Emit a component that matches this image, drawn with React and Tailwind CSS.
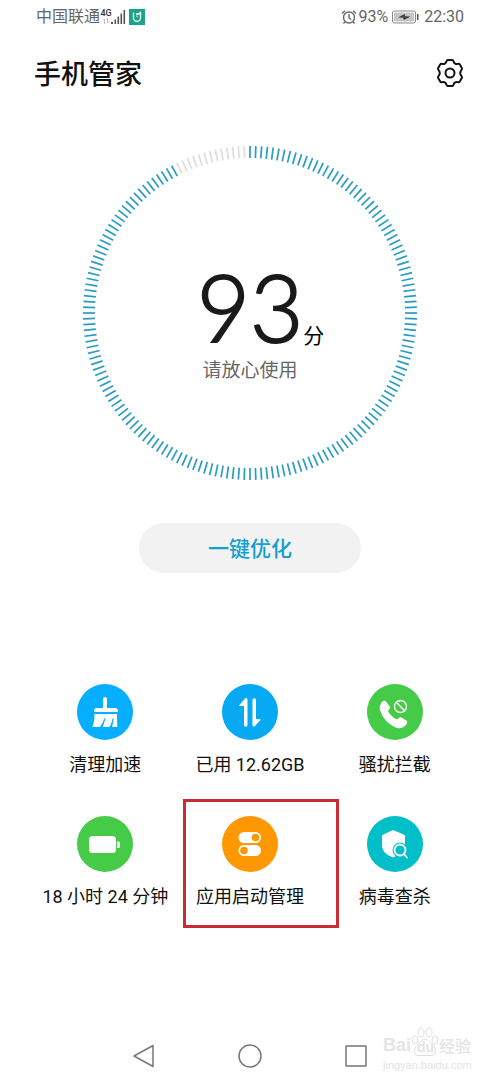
const TICK_COUNT = 180;
const SCORE = 93;

const StatusBar = () => (
  <div className="flex h-[34px] items-center justify-between pr-9 pl-9 text-base text-[#666]">
    <div className="flex items-center">
      <span>中国联通</span>
      <div className="ml-px flex h-4 w-2.5 flex-col items-center">
        <span className="text-[9px] leading-2 font-medium text-[#333]">4G</span>
        <svg viewBox="0 0 8 6" className="mt-px h-1.5 w-2" stroke="#bbb" strokeWidth="1" fill="none">
          <path d="M2.500 6V1L1 2.500M5.500 0v5L7 3.500" />
        </svg>
      </div>
      <svg viewBox="0 0 16 16" className="h-4 w-4" fill="#555">
        <path d="M0 13h2v2H0zM3.500 10.500h1.600V15H3.500zM6.500 7.500h1.600V15H6.500zM9.500 4.500h1.600V15H9.500zM12.500 1h1.600v14h-1.600z" />
      </svg>
      <svg viewBox="0 0 16 16" className="ml-0.5 h-4 w-4">
        <rect width="16" height="16" fill="#18a589" />
        <path d="M4.500 3.500v5.300a3.500 3.500 0 0 0 7 0V3.500L9.700 5H7" fill="none" stroke="#fff" strokeWidth="1.300" />
        <path d="M8 6.500v1.500" fill="none" stroke="#fff" strokeWidth="1" />
      </svg>
    </div>
    <div className="flex items-center">
      <svg viewBox="0 0 16 16" className="h-4 w-4" fill="none" stroke="#666" strokeWidth="1.400">
        <circle cx="8" cy="8.500" r="5.500" />
        <path d="M8 5v4l2.200 1.500M1 4.500 4 1.800M15 4.500l-3-2.700M3.800 13l-1.300 1.500M12.200 13l1.300 1.500" />
      </svg>
      <span className="ml-px">93%</span>
      <svg viewBox="0 0 28 14" className="mr-1 ml-1 h-3.5 w-7">
        <rect x="0.5" y="1" width="23" height="12" rx="2" fill="#fff" stroke="#888" />
        <rect x="2" y="2.500" width="20" height="9" rx="1" fill="#c6c6c6" />
        <path d="M6 7.500 12.500 4l1 2.200L18.500 6.500 12 10l-1-2.200z" fill="#444" />
        <path d="M25 4h1.500v6H25z" fill="#555" />
      </svg>
      <span>22:30</span>
    </div>
  </div>
);

const Header = () => (
  <header className="flex h-[78px] items-center justify-between pr-9 pl-[34px]">
    <h1 className="pt-1 text-[27px] font-medium text-[#111]">手机管家</h1>
    <button type="button" aria-label="设置">
      <svg viewBox="0 0 28 30" className="h-[30px] w-7" fill="none" stroke="#111" strokeWidth="2" strokeLinejoin="round">
        <path d="M12 2h4c.8 0 1.300.4 1.500 1.200.5 2.300 2.300 3.300 4.500 2.700.8-.2 1.400 0 1.800.7l2 3.400c.4.700.3 1.300-.3 1.900-1.700 1.600-1.700 4.600 0 6.200.6.600.7 1.200.3 1.900l-2 3.400c-.4.700-1 .9-1.800.7-2.200-.6-4 .4-4.500 2.700-.2.800-.7 1.200-1.500 1.200h-4c-.8 0-1.300-.4-1.500-1.200-.5-2.300-2.300-3.300-4.500-2.700-.8.200-1.400 0-1.800-.7l-2-3.400c-.4-.7-.3-1.300.3-1.900 1.700-1.600 1.700-4.600 0-6.200-.6-.6-.7-1.200-.3-1.900l2-3.400c.4-.7 1-.9 1.800-.7 2.200.6 4-.4 4.500-2.700C10.700 2.400 11.200 2 12 2z" />
        <circle cx="14" cy="15" r="4.500" />
      </svg>
    </button>
  </header>
);

const ScoreRing = () => {
  const filled = Math.round((TICK_COUNT * SCORE) / 100);
  return (
    <section className="relative mx-auto mt-[31px] h-[340px] w-[340px]">
      <svg viewBox="-170 -170 340 340" className="h-full w-full" strokeWidth="1.700">
        {Array.from({ length: TICK_COUNT }, (_, i) => (
          <line
            key={i}
            y1="-167"
            y2="-155"
            stroke={i < filled ? '#2a9cbf' : '#dedede'}
            transform={`rotate(${i * 2})`}
          />
        ))}
      </svg>
      <div className="absolute inset-0 flex flex-col items-center pt-[129px]">
        <div className="relative font-[Lato] text-[92px] leading-[70px] font-light text-[#1a1a1a]">
          <span className="[-webkit-text-stroke:2px_#1a1a1a]">{SCORE}</span>
          <span className="absolute -bottom-0.5 left-full font-['Noto_Sans_CJK_SC'] text-[21px] leading-5 font-normal text-black">分</span>
        </div>
        <p className="mt-[17px] text-[19px] leading-6 text-[#666]">请放心使用</p>
      </div>
    </section>
  );
};

const BroomIcon = () => (
  <svg viewBox="0 0 56 56" fill="#fff">
    <path d="M26 15a2 2 0 0 1 4 0v9h8a3 3 0 0 1 3 3v1H17v-1a3 3 0 0 1 3-3h6z" />
    <path d="M17.500 30H40c0 4.500.3 9 .3 13H34.500l1.200-6.500L32.500 43h-7.300l2-6.500L23 43h-7.500c1.500-4 2-8.500 2-13z" />
    <path d="M27.800 34.500 25 43.500M36 34.500l-1.500 9" fill="none" stroke="#06aeff" strokeWidth="1.200" />
  </svg>
);

const TrafficIcon = () => (
  <svg viewBox="0 0 56 56" fill="#fff">
    <path d="M17 21.500 23 14.500c.8-1 2.500-.5 2.500 1V41a1.700 1.700 0 0 1-3.500 0V22h-4.500z" />
    <path d="M39 35.500 33 42c-.8 1-2.500.5-2.500-1V16a1.700 1.700 0 0 1 3.500 0v19z" />
  </svg>
);

const PhoneBlockIcon = () => (
  <svg viewBox="0 0 56 56">
    <path d="M14 19.500c1.500-2.500 3.500-3.500 5-2l3.500 4.500c1 1.500.5 2.500-.5 3.500s-1 1.500-.5 2.500c2 3 4.500 5.500 7.500 7 1 .5 1.500.5 2.300-.4 1-1.300 2-1.600 3.500-.8l4.500 2.700c1.700 1 1 3-.5 4.500-2.500 2.800-5.800 4-10 2.500C20.500 40 15 33 13 26c-.7-2.500 0-4.500 1-6.500z" fill="#fff" />
    <g fill="none" stroke="#fff" strokeWidth="1.400">
      <circle cx="33.500" cy="22.500" r="6" />
      <path d="m29.300 18.300 8.400 8.400" />
    </g>
  </svg>
);

const BatteryIcon = () => (
  <svg viewBox="0 0 56 56" fill="#fff">
    <rect x="12" y="20" width="27" height="17" rx="3.500" />
    <path d="M40 25.500h1.500A1.500 1.500 0 0 1 43 27v3.500a1.500 1.500 0 0 1-1.500 1.500H40z" />
  </svg>
);

const TogglesIcon = () => (
  <svg viewBox="0 0 56 56">
    <rect x="16.500" y="16" width="22.500" height="11" rx="5.500" fill="#fff" />
    <rect x="16.500" y="29" width="22.500" height="11" rx="5.500" fill="#fff" />
    <circle cx="33.500" cy="21.500" r="3.800" fill="#ff9800" />
    <circle cx="22" cy="34.500" r="3.800" fill="#ff9800" />
  </svg>
);

const ShieldScanIcon = () => (
  <svg viewBox="0 0 56 56">
    <path d="m26 14 10.500 4.500c1 .4 1.500 1 1.500 2V29c0 6-5 9.500-12 12.500C19 38.500 15 35 15 29v-8.500c0-1 .5-1.600 1.500-2z" fill="#fff" />
    <circle cx="33" cy="34" r="7.500" fill="#00bfc9" />
    <g fill="none" stroke="#fff" strokeWidth="1.800" strokeLinecap="round">
      <circle cx="33" cy="34" r="5.500" />
      <path d="m37 38 3 3.500" />
    </g>
  </svg>
);

const tools = [
  { label: '清理加速', color: 'bg-[#06aeff]', Icon: BroomIcon },
  { label: '已用 12.62GB', color: 'bg-[#06a9f2]', Icon: TrafficIcon },
  { label: '骚扰拦截', color: 'bg-[#46cb48]', Icon: PhoneBlockIcon },
  { label: '18 小时 24 分钟', color: 'bg-[#46cb48]', Icon: BatteryIcon },
  { label: '应用启动管理', color: 'bg-[#ff9800]', Icon: TogglesIcon, marked: true },
  { label: '病毒查杀', color: 'bg-[#00bfc9]', Icon: ShieldScanIcon },
];

const ToolGrid = () => (
  <section className="mt-[111px] grid grid-cols-3 gap-y-[37px] px-[33px]">
    {tools.map(({ label, color, Icon, marked }) => (
      <button key={label} type="button" className="relative flex flex-col items-center">
        <span className={`h-14 w-14 rounded-full ${color}`}>
          <Icon />
        </span>
        <span className="mt-[11px] text-lg leading-7 whitespace-nowrap text-[#111]">{label}</span>
        {marked && <span className="absolute -top-[17px] -bottom-[17px] left-[5px] w-[156px] border-3 border-[#cb2b34]" />}
      </button>
    ))}
  </section>
);

const NavBar = () => (
  <nav className="mt-auto flex justify-center gap-[82px] pt-8 pb-[15px]">
    <button type="button" aria-label="返回">
      <svg viewBox="0 0 24 24" className="h-6 w-6" fill="none" stroke="#777" strokeWidth="1.500" strokeLinejoin="round">
        <path d="M21 1.500v21L2 12z" />
      </svg>
    </button>
    <button type="button" aria-label="主页">
      <svg viewBox="0 0 24 24" className="h-6 w-6" fill="none" stroke="#777" strokeWidth="1.500">
        <circle cx="12" cy="12" r="11" />
      </svg>
    </button>
    <button type="button" aria-label="最近任务">
      <svg viewBox="0 0 24 24" className="h-6 w-6" fill="none" stroke="#777" strokeWidth="1.500">
        <rect x="2" y="2" width="20" height="20" rx="0.5" />
      </svg>
    </button>
  </nav>
);

const Watermark = () => (
  <div className="absolute right-7 bottom-2.5 w-[89px] font-['Liberation_Sans'] whitespace-nowrap text-[#e4e4e4]">
    <div className="flex items-end">
      <span className="text-lg leading-6 font-bold">Bai</span>
      <span className="relative h-7 w-7 shrink-0">
        <svg viewBox="0 0 28 30" className="absolute bottom-0 left-0 h-[30px] w-7" fill="#fff" stroke="#dedede">
          <ellipse cx="4" cy="13" rx="3" ry="4" />
          <ellipse cx="10" cy="5.500" rx="3" ry="4.500" />
          <ellipse cx="18" cy="5.500" rx="3" ry="4.500" />
          <ellipse cx="24" cy="13" rx="3" ry="4" />
          <path d="M14 12c-4 0-5 4-8 6.500S2 28 7 28.500h14c5-.5 4-7.500 1-10S18 12 14 12z" />
        </svg>
        <span className="absolute bottom-0 left-1.5 text-sm leading-5 font-bold">du</span>
      </span>
      <span className="font-['Noto_Sans_CJK_SC'] text-base leading-6 font-medium">经验</span>
    </div>
    <div className="text-[11px] leading-4">jingyan.baidu.com</div>
  </div>
);

export default function App() {
  return (
    <div className="relative flex min-h-screen flex-col bg-white font-[Roboto,'Noto_Sans_CJK_SC',sans-serif]">
      <StatusBar />
      <Header />
      <ScoreRing />
      <button
        type="button"
        className="mx-auto mt-10 h-[50px] w-[222px] rounded-full bg-[#f2f2f2] pt-1 text-[21px] font-medium text-[#12a0cf]"
      >
        一键优化
      </button>
      <ToolGrid />
      <NavBar />
      <Watermark />
    </div>
  );
}
